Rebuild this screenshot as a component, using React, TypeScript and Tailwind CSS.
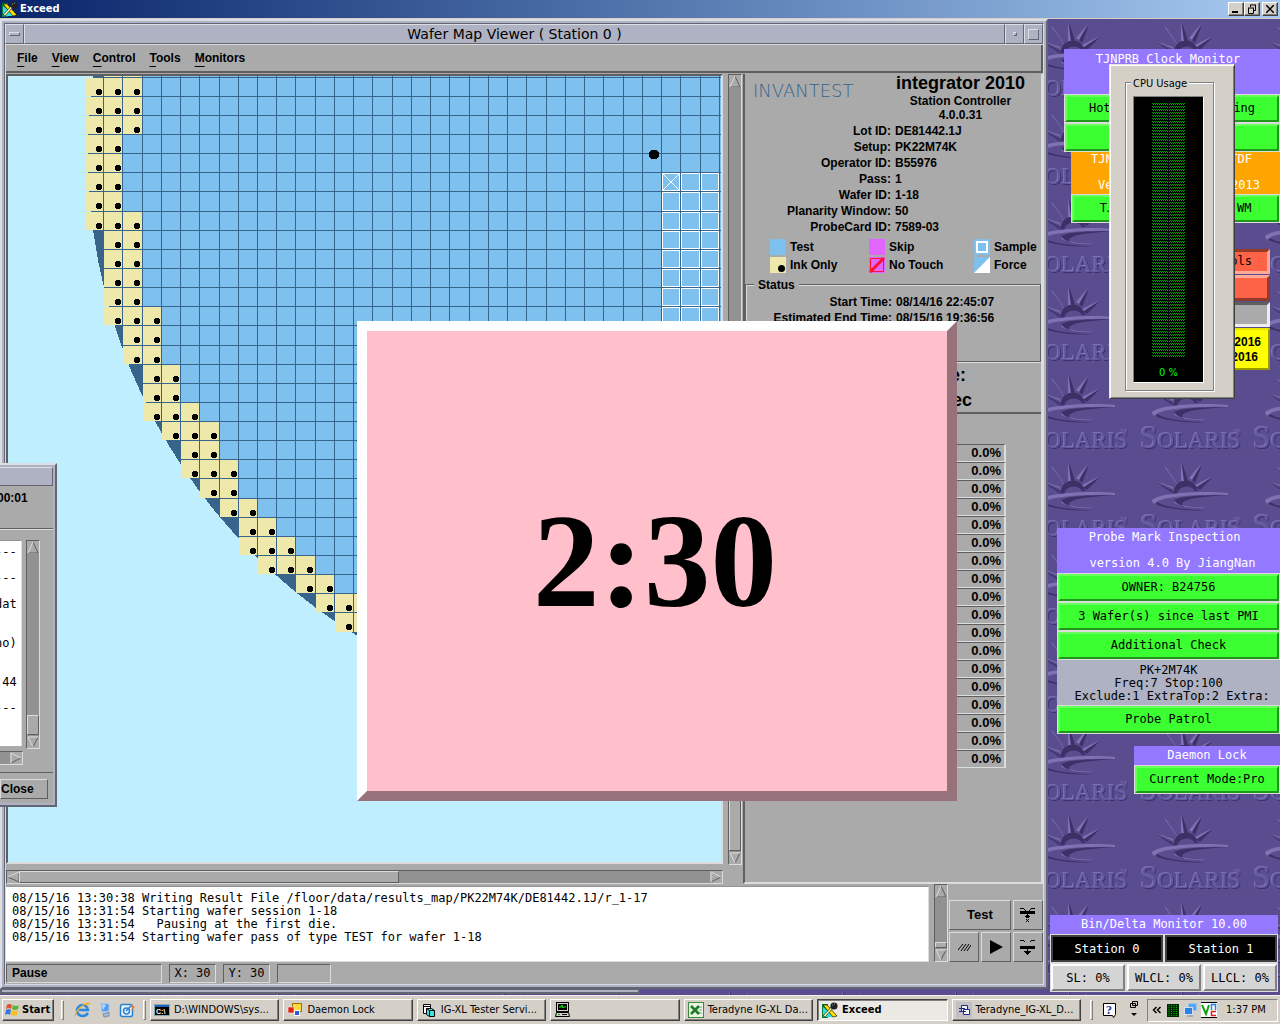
import React from 'react';

const MONO = "font-['DejaVu_Sans_Mono','Liberation_Mono',monospace]";
const TAHOMA = "font-['DejaVu_Sans_Condensed','DejaVu_Sans',sans-serif]";
const RAISED = 'border border-t-[#dcdcdc] border-l-[#dcdcdc] border-b-[#5f5f5f] border-r-[#5f5f5f]';
const SUNKEN = 'border border-t-[#5f5f5f] border-l-[#5f5f5f] border-b-[#dcdcdc] border-r-[#dcdcdc]';
const SUNKEN2 = 'border-2 border-t-[#5f5f5f] border-l-[#5f5f5f] border-b-[#dcdcdc] border-r-[#dcdcdc]';

/* ---------- wafer drawing ---------- */

const gx = (i: number) => 95 + 19 * i + Math.floor(i * 0.24 + 0.58);
const gy = (j: number) => 1 + 19 * j + Math.floor(j / 7.5 + 0.15);

// [first, last] ink-only column for each die row, starting one row above the visible area
const INK: [number, number][] = [
  [0, 1],
  [-1, 1], [-1, 1], [-1, 1], [-1, 0], [-1, 0], [-1, 0], [-1, 0], [-1, 1],
  [0, 1], [0, 1], [0, 1], [0, 1], [0, 2], [1, 2], [1, 2], [2, 3], [2, 3],
  [2, 4], [3, 5], [4, 5], [4, 6], [5, 6], [6, 7], [7, 8], [7, 9], [8, 10],
  [10, 11], [11, 13], [12, 14], [14, 16],
];

function WaferMap() {
  const cells: React.ReactNode[] = [];
  INK.forEach(([a, b], k) => {
    const r = k - 1;
    const y = gy(r) + 1;
    const h = gy(r + 1) - y;
    for (let c = a; c < 33; c++) {
      const ink = c <= b;
      const x = gx(c) + 1;
      cells.push(
        <rect key={`${r}:${c}`} x={x} y={y} width={gx(c + 1) - x} height={h} fill={ink ? '#eee8aa' : '#7ec0ee'} />,
      );
      if (ink) cells.push(<path key={`d${r}:${c}`} d={`M${gx(c) + 13} ${gy(r) + 12}h4v1h1v4h-1v1h-4v-1h-1v-4h1z`} fill="#000" />);
    }
  });
  const samples: React.ReactNode[] = [];
  for (let r = 5; r < 20; r++)
    for (let c = 29; c < 32; c++)
      samples.push(
        <rect key={`${r}-${c}`} x={gx(c) + 1.5} y={gy(r) + 1.5} width={gx(c + 1) - gx(c) - 2} height={gy(r + 1) - gy(r) - 2} fill="none" stroke="#fff" />,
      );
  return (
    <svg className="absolute inset-0 h-full w-full" shapeRendering="crispEdges" aria-label="Wafer map">
      <circle cx="646" cy="78" r="566" fill="#36648b" />
      {cells}
      {samples}
      <path d={`M${gx(29) + 1} ${gy(5) + 1}l18 18m0 -18l-18 18`} stroke="#fff" fill="none" />
      <circle cx="646" cy="78.5" r="5" />
    </svg>
  );
}

/* ---------- desktop backdrop ---------- */

const LIGHT = '#7e72b4';
const DARK = '#3b3166';

function SolarisText({ x, y, fill }: { x: number; y: number; fill: string }) {
  return (
    <g fill={fill} fontFamily="Liberation Serif, serif">
      <text x={x} y={y} fontSize="32">S<tspan fontSize="23">OLARIS</tspan></text>
      <text x={x + 94} y={y - 15} fontSize="4">TM</text>
    </g>
  );
}

function Backdrop() {
  return (
    <svg className="absolute inset-0 h-full w-full" aria-hidden="true">
      <defs>
        <pattern id="solaris" patternUnits="userSpaceOnUse" x="5" y="1" width="113" height="88">
          <rect width="113" height="88" fill="#594d8f" />
          <g fill={DARK}>
            <path d="M47 2L53 21L48 21ZM67 5L60 23L56 19ZM78 17L65 30L61 27ZM21 22L38 31L39 34ZM30 8L42 25L43 24Z" />
            <path d="M39 34A12 12 0 0 1 63 31L60 31A10 10 0 0 0 42 34Z" />
            <path d="M18 41C18 47 50 52 73 50C50 50 28 47 20 41Z" />
            <path d="M93 35C60 35 40 37 39 41C42 45 46 46 50 47C44 43 44 38 93 35Z" />
          </g>
          <g fill={LIGHT}>
            <path d="M46 1L46 21L49 21ZM66 4L54 18L57 20ZM78 16L60 25L62 27ZM20 21L39 29L38 27Z" />
            <path d="M93 33C60 30 18 34 17 41C18 44 20 44 21 43C24 37 60 34 93 35Z" />
            <path d="M40 41C42 46 55 47 72 48C55 49 40 45 39 42Z" />
          </g>
          <path d="M30 7L42 24" stroke={LIGHT} fill="none" />
          <SolarisText x={6} y={77} fill={DARK} />
          <SolarisText x={4} y={75} fill={LIGHT} />
          <SolarisText x={5} y={76} fill="#6257a0" />
        </pattern>
      </defs>
      <rect width="100%" height="100%" fill="url(#solaris)" />
    </svg>
  );
}

/* ---------- Motif pieces ---------- */

const ARROWS = {
  up: ['M6 1L1 12', 'M6 1L11 12H1'],
  down: ['M11 1H1L6 11', 'M11 1L6 11'],
  left: ['M12 1L1 6', 'M1 6L12 11V1'],
  right: ['M1 11V1L11 6', 'M11 6L1 11'],
};

function Arrow({ dir }: { dir: keyof typeof ARROWS }) {
  return (
    <button aria-label={`Scroll ${dir}`} className="block h-3 w-3 shrink-0 bg-[#aaaaaa]">
      <svg width="12" height="12" fill="none">
        <path d={ARROWS[dir][1]} stroke="#5f5f5f" />
        <path d={ARROWS[dir][0]} stroke="#dcdcdc" />
      </svg>
    </button>
  );
}

function VScroll({ thumb }: { thumb: string }) {
  return (
    <div className={`flex w-[14px] shrink-0 flex-col bg-[#929292] ${SUNKEN}`}>
      <Arrow dir="up" />
      <div className="flex flex-1 flex-col justify-end">
        <div className={`mb-px bg-[#aaaaaa] ${RAISED} ${thumb}`} />
      </div>
      <Arrow dir="down" />
    </div>
  );
}

const FRAME = 'border-2 border-t-[#dcdee5] border-l-[#dcdee5] border-b-[#636573] border-r-[#636573] bg-[#aeb2c3]';

/* ---------- wafer map viewer ---------- */

const INFO = [
  ['Lot ID:', 'DE81442.1J'],
  ['Setup:', 'PK22M74K'],
  ['Operator ID:', 'B55976'],
  ['Pass:', '1'],
  ['Wafer ID:', '1-18'],
  ['Planarity Window:', '50'],
  ['ProbeCard ID:', '7589-03'],
];

function Pairs({ rows }: { rows: string[][] }) {
  return (
    <dl className="grid grid-cols-[146px_1fr] gap-x-1">
      {rows.map(([k, v]) => (
        <React.Fragment key={k}>
          <dt className="text-right leading-4 whitespace-nowrap">{k}</dt>
          <dd className="leading-4">{v}</dd>
        </React.Fragment>
      ))}
    </dl>
  );
}

function Legend() {
  return (
    <div className="mt-1 grid grid-cols-[99px_105px_1fr] gap-y-[2px] pl-[25px]">
      <Key label="Test"><rect width="16" height="16" fill="#7ec0ee" /></Key>
      <Key label="Skip"><rect width="16" height="16" fill="#e066ff" /></Key>
      <Key label="Sample"><rect width="16" height="16" fill="#7ec0ee" /><rect x="3" y="3" width="10" height="10" fill="none" stroke="#fff" strokeWidth="2" /></Key>
      <Key label="Ink Only"><rect width="16" height="16" fill="#eee8aa" /><circle cx="11.5" cy="11.5" r="3.5" /></Key>
      <Key label="No Touch"><rect width="16" height="16" fill="#e066ff" /><path d="M1.5 1.5H14.5V14.5H1.5ZM1 15L15 1" stroke="#ff1030" fill="none" /><path d="M1 15L15 1" stroke="#ff1030" strokeWidth="3" /></Key>
      <Key label="Force"><rect width="16" height="16" fill="#7ec0ee" /><path d="M16 0V16H0Z" fill="#fff" /></Key>
    </div>
  );
}

function Key({ label, children }: { label: string; children: React.ReactNode }) {
  return (
    <div className="flex h-4 items-center gap-1 whitespace-nowrap">
      <svg width="16" height="16" className="shrink-0">{children}</svg>
      <span>{label}</span>
    </div>
  );
}

function InfoPanel() {
  return (
    <section className="flex w-[300px] shrink-0 flex-col border-r-2 border-b-2 border-l-2 border-r-[#dcdcdc] border-b-[#dcdcdc] border-l-[#5f5f5f]">
      <div className="flex justify-between pr-4 pl-2">
        <div className="pt-[9px] font-['DejaVu_Sans',sans-serif] text-[18px] leading-4 font-extralight text-[#36648b]">INVANTEST</div>
        <div className="text-center">
          <div className="mb-[2px] text-[18px] leading-[18px]">integrator 2010</div>
          <div className="leading-[14px]">Station Controller</div>
          <div className="leading-[14px]">4.0.0.31</div>
        </div>
      </div>
      <div className="mt-px"><Pairs rows={INFO} /></div>
      <Legend />
      <div className="relative mt-[11px] h-[78px] border border-[#5f5f5f] pt-[9px] shadow-[inset_1px_1px_#dcdcdc]">
        <div className="absolute -top-2 left-2 bg-[#aaaaaa] px-1 leading-4">Status</div>
        <Pairs rows={[['Start Time:', '08/14/16 22:45:07'], ['Estimated End Time:', '08/15/16 19:36:56']]} />
      </div>
      <div className="h-[52px] border-t border-b-2 border-t-[#dcdcdc] border-b-[#5f5f5f] pr-[69px] text-right text-[18px] leading-[25px]">
        <div className="pr-[6px]">Time:</div>
        <div>0.0 sec</div>
      </div>
      <ul className="mt-[30px] mr-[35px] ml-10 text-[13px]">
        {Array.from({ length: 18 }, (_, i) => (
          <li key={i} className="h-[18px] border-t border-r-2 border-b border-t-[#5f5f5f] border-r-[#dcdcdc] border-b-[#dcdcdc] pr-[3px] text-right leading-4">0.0%</li>
        ))}
      </ul>
    </section>
  );
}

const LOG = `08/15/16 13:30:38 Writing Result File /floor/data/results_map/PK22M74K/DE81442.1J/r_1-17
08/15/16 13:31:54 Starting wafer session 1-18
08/15/16 13:31:54   Pausing at the first die.
08/15/16 13:31:54 Starting wafer pass of type TEST for wafer 1-18`;

function Controls() {
  const b = `flex items-center justify-center bg-[#aaaaaa] ${RAISED}`;
  return (
    <div className="mt-4 grid grid-cols-[30px_30px_30px] grid-rows-[30px_30px] gap-[2px]">
      <button className={`col-span-2 text-[13px] font-bold ${b}`}>Test</button>
      <button aria-label="Raise" className={b}>
        <svg width="16" height="16" shapeRendering="crispEdges"><path d="M0 4H15V7H0ZM7 7L10 10H9V11H6V10H4Z" /><path d="M0 1H3L6 4M15 1H12L9 4M6 12h1m1 0h1m-2 1h1m-2 1h1m1 0h1" stroke="#000" fill="none" /></svg>
      </button>
      <button aria-label="Pattern" className={b}>
        <svg width="13" height="7"><path d="M0 6L5 0M3 7L8 0M6 7L11 0M9 7L13 1" stroke="#000" fill="none" /></svg>
      </button>
      <button aria-label="Run" className={b}>
        <svg width="14" height="14"><path d="M1 0L14 7L1 14Z" /></svg>
      </button>
      <button aria-label="Lower" className={b}>
        <svg width="16" height="16" shapeRendering="crispEdges"><path d="M0 7H15V10H0ZM4 12H11L7.5 16Z" /><path d="M0 1H3L5 3M15 1H12L10 3M7 10v2" stroke="#000" fill="none" /></svg>
      </button>
    </div>
  );
}

function Viewer() {
  const cap = 'border border-t-[#dcdee5] border-l-[#dcdee5] border-b-[#636573] border-r-[#636573]';
  return (
    <div className={`absolute top-0 right-[232px] bottom-[6px] left-0 flex flex-col p-[2px] ${FRAME}`}>
      <div className="flex min-h-0 flex-1 flex-col border border-t-[#636573] border-l-[#636573] border-b-[#dcdee5] border-r-[#dcdee5]">
        <div className="flex h-5 shrink-0">
          <button aria-label="Window menu" className={`flex w-[19px] items-center justify-center ${cap}`}><span className={`h-1 w-[11px] ${cap}`} /></button>
          <div className={`flex-1 text-center font-['DejaVu_Sans',sans-serif] text-[14px] leading-[18px] ${cap}`}>Wafer Map Viewer ( Station 0 )</div>
          <button aria-label="Minimize" className={`flex w-[19px] items-center justify-center ${cap}`}><span className={`h-1 w-1 ${cap}`} /></button>
          <button aria-label="Maximize" className={`flex w-[19px] items-center justify-center ${cap}`}><span className={`h-[11px] w-[11px] ${cap}`} /></button>
        </div>
        <div className="flex min-h-0 flex-1 flex-col border-t border-l border-[#dcdcdc] bg-[#aaaaaa] text-[12px] font-bold">
          <nav className="flex h-7 shrink-0 items-center gap-[14px] border-r-2 border-b-2 border-[#5f5f5f] pl-[11px]">
            {['File', 'View', 'Control', 'Tools', 'Monitors'].map((m) => (
              <button key={m} className="leading-4"><span className="underline underline-offset-4">{m[0]}</span>{m.slice(1)}</button>
            ))}
          </nav>
          <div className="flex min-h-0 flex-1 pt-px">
            <div className="flex min-w-0 flex-1 flex-col">
              <div className={`relative min-h-0 flex-1 overflow-hidden bg-[#bfefff] ${SUNKEN2}`}><WaferMap /></div>
              <div className={`mt-[6px] flex h-[14px] shrink-0 bg-[#929292] ${SUNKEN}`}>
                <Arrow dir="left" />
                <div className="flex flex-1"><div className={`w-[55%] bg-[#aaaaaa] ${RAISED}`} /></div>
                <Arrow dir="right" />
              </div>
            </div>
            <div className="mr-px mb-[19px] ml-[5px] flex"><VScroll thumb="h-[420px]" /></div>
            <InfoPanel />
          </div>
          <div className="flex h-[78px] shrink-0">
            <textarea readOnly aria-label="Session log" value={LOG} className={`mt-[2px] min-w-0 flex-1 resize-none overflow-hidden border-t border-r border-b border-[#929292] border-r-[#dcdcdc] border-b-[#dcdcdc] bg-white pt-[5px] pl-[6px] text-[12px] leading-[13px] font-normal whitespace-pre outline-none ${MONO}`} />
            <div className="mr-px ml-[5px] flex"><VScroll thumb="h-[6px]" /></div>
            <Controls />
          </div>
          <div className="flex h-[22px] shrink-0 gap-[7px] pt-[2px]">
            <div className={`mb-px w-[156px] pl-[5px] text-[12px] leading-[17px] ${SUNKEN}`}>Pause</div>
            <div className={`mb-px w-[47px] text-center font-normal leading-[17px] ${SUNKEN} ${MONO}`}>X: 30</div>
            <div className={`mb-px w-[47px] text-center font-normal leading-[17px] ${SUNKEN} ${MONO}`}>Y: 30</div>
            <div className={`mb-px w-[54px] ${SUNKEN}`} />
          </div>
        </div>
      </div>
    </div>
  );
}

/* ---------- partially hidden log window ---------- */

function SideWindow() {
  return (
    <div className={`absolute top-[444px] left-0 flex h-[344px] w-[57px] flex-col border-l-0 py-[2px] pr-[2px] text-[12px] ${FRAME}`}>
      <div className="h-[19px] shrink-0 border border-l-0 border-t-[#dcdee5] border-b-[#636573] border-r-[#636573]" />
      <div className="flex flex-1 flex-col overflow-hidden bg-[#aaaaaa]">
        <div className="h-[43px] border-b border-[#5f5f5f] pt-1 font-bold leading-4"><span className="-ml-[3px]">00:01</span></div>
        <div className="flex h-[222px] border-t border-[#dcdcdc] pt-[10px]">
          <pre className={`h-[206px] w-[22px] overflow-hidden border-t border-r border-t-[#929292] border-r-[#dcdcdc] bg-white pt-[5px] leading-[13px] ${MONO}`}>
            <div className="-ml-[5px] w-[22px] overflow-hidden">{'---\n\n---\n\ndat\n\n\nno)\n\n\n 44\n\n---'}</div>
          </pre>
          <div className="ml-[4px] flex h-[209px]"><VScroll thumb="h-5" /></div>
        </div>
        <div className={`flex h-[14px] w-[23px] justify-end border-l-0 bg-[#929292] ${SUNKEN}`}><Arrow dir="right" /></div>
        <div className="mt-[7px] flex-1 border-t border-[#5f5f5f] pt-[6px]">
          <button className={`h-5 w-[48px] overflow-hidden bg-[#aaaaaa] pr-[14px] text-right leading-4 font-bold ${RAISED}`}>Close</button>
        </div>
      </div>
    </div>
  );
}

/* ---------- right-hand tool windows ---------- */

function Green({ children }: { children?: React.ReactNode }) {
  return (
    <button className="block h-[29px] w-full border border-[#dcdcdc]">
      <span className="block h-[27px] border-2 border-t-[#68ff5c] border-l-[#68ff5c] border-r-[#20961a] border-b-[#20961a] bg-[#3cff32] leading-[23px] whitespace-pre">{children}</span>
    </button>
  );
}

function ToolWindows() {
  const base = `absolute text-center text-[12px] whitespace-pre ${MONO}`;
  return (
    <>
      <div className={`${base} top-[30px] right-0 w-[216px]`}>
        <div className="h-[45px] bg-[#9478ff] pr-2 leading-5 text-white">TJNPRB Clock Monitor</div>
        <Green>Hot Lot Status Checking</Green>
        <Green />
        <div className="ml-[7px]">
          <div className="h-[42px] bg-[#ffa500] pt-px text-white">
            <div className="flex justify-between pr-7 pl-5 leading-[13px]"><span>TJN</span><span>TDF</span></div>
            <div className="mt-[13px] flex justify-between pr-5 pl-[27px] leading-[13px]"><span>Ver</span><span>2013</span></div>
          </div>
          <Green>TJN                WM</Green>
        </div>
      </div>
      <div className={`${base} top-[230px] right-[10px] w-[140px]`}>
        <button className="block h-[25px] w-full border-[3px] border-t-[#953a29] border-r-[#ffa898] border-b-[#ffa898] border-l-[#953a29] bg-[#ff6347] pr-[15px] text-right leading-[19px]">Tools</button>
        <button aria-label="Tool" className="mt-px block h-[26px] w-full border-[3px] border-t-[#ffa898] border-r-[#953a29] border-b-[#953a29] border-l-[#ffa898] bg-[#ff6347]" />
        <button aria-label="Idle" className="mt-px block h-[25px] w-full border-[3px] border-t-[#5f5f5f] border-r-[#eeeeee] border-b-[#eeeeee] border-l-[#5f5f5f] bg-[#aaaaaa]" />
        <div className="mt-px h-[42px] border-2 border-t-[#e6e600] border-r-[#999900] border-b-[#999900] border-l-[#e6e600] bg-[#ffff00] pt-[5px] text-right font-['Liberation_Sans',sans-serif] text-[12px] font-bold leading-[15px]">
          <div className="pr-[7px]">08/14/2016</div>
          <div className="pr-[10px]">08/15/2016</div>
        </div>
      </div>
      <div className={`${base} top-[509px] right-0 w-[223px]`}>
        <div className="h-[45px] bg-[#9478ff] pt-[3px] leading-[13px] text-white">
          <div className="pr-2">Probe Mark Inspection</div>
          <div className="mt-[13px] pl-2">version 4.0 By JiangNan</div>
        </div>
        <Green>OWNER: B24756</Green>
        <Green>3 Wafer(s) since last PMI</Green>
        <Green>Additional Check</Green>
        <div className="h-[45px] bg-[#aeb2c3] pt-1 leading-[13px]">{'PK+2M74K\nFreq:7 Stop:100\n Exclude:1 ExtraTop:2 Extra:'}</div>
        <Green>Probe Patrol</Green>
      </div>
      <div className={`${base} top-[727px] right-0 w-[146px]`}>
        <div className="h-[19px] bg-[#9478ff] leading-[19px] text-white">Daemon Lock</div>
        <Green>Current Mode:Pro</Green>
      </div>
      <div className={`${base} top-[896px] right-[2px] w-[228px] bg-[#dcdcdc]`}>
        <div className="h-[19px] bg-[#9478ff] leading-[19px] text-white">Bin/Delta Monitor 10.00</div>
        <div className="flex gap-[2px] p-px">
          {['Station 0', 'Station 1'].map((s) => (
            <button key={s} className="h-[27px] flex-1 border-2 border-[#404040] bg-black leading-[22px] text-white">{s}</button>
          ))}
        </div>
        <div className="flex gap-[2px] p-px">
          {['SL: 0%', 'WLCL: 0%', 'LLCL: 0%'].map((s) => (
            <button key={s} className="h-[27px] w-1/3 border-2 border-t-white border-r-[#808080] border-b-[#808080] border-l-white bg-[#d4d4d4] leading-[22px]">{s}</button>
          ))}
        </div>
      </div>
    </>
  );
}

function CpuUsage() {
  return (
    <div className={`absolute top-[45px] right-[45px] h-[335px] w-[126px] border border-t-[#e8e6e0] border-l-[#e8e6e0] border-r-[#404040] border-b-[#404040] bg-[#d4d0c8] px-[15px] pt-[17px] text-[11px] shadow-[inset_1px_1px_#fff,inset_-1px_-1px_#808080] ${TAHOMA}`}>
      <div className="relative h-[309px] w-[89px] border border-[#808080] px-[7px] pt-[13px] shadow-[inset_1px_1px_#fff,1px_1px_#fff]">
        <div className="absolute -top-[7px] left-[5px] bg-[#d4d0c8] px-[2px] leading-[15px] whitespace-nowrap">CPU Usage</div>
        <div className="flex h-[287px] w-[71px] flex-col items-center border border-t-[#808080] border-l-[#808080] border-r-white border-b-white bg-black pt-[6px]">
          <svg width="33" height="255" shapeRendering="crispEdges" aria-hidden="true">
            <defs>
              <pattern id="dots" width="2" height="3" patternUnits="userSpaceOnUse"><path d="M0 0h1v1h-1zM1 1h1v1h-1z" fill="#00a000" /></pattern>
            </defs>
            <rect width="16" height="255" fill="url(#dots)" />
            <rect x="17" width="16" height="255" fill="url(#dots)" />
          </svg>
          <div className="mt-[6px] leading-[18px] text-[#00ff00]">0 %</div>
        </div>
      </div>
    </div>
  );
}

/* ---------- Windows shell ---------- */

function ExceedIcon() {
  return (
    <svg width="16" height="16" className="shrink-0">
      <path d="M0 2H6V16H0Z" fill="#008040" /><path d="M1 5L13 15H1Z" fill="#30e0e0" />
      <path d="M1 3L5 3L15 14L11 15Z" fill="#ffe000" stroke="#000" strokeWidth=".6" />
      <path d="M13 4L3 15L1 14L10 4Z" fill="#fff59a" stroke="#000" strokeWidth=".6" />
      <circle cx="12" cy="4" r="3.6" fill="#222" /><path d="M10 3h1m1-1h1" stroke="#999" />
    </svg>
  );
}

const ICONS: Record<string, React.ReactNode> = {
  cmd: <svg width="16" height="16"><rect x=".5" y="2.5" width="15" height="11" fill="#000" stroke="#8aa" /><rect x="1" y="3" width="14" height="2" fill="#1d5fc0" /><text x="2" y="12" fontSize="7" fontWeight="bold" fill="#fff" fontFamily="Liberation Sans">C:\</text></svg>,
  daemon: <svg width="16" height="16"><rect x="5.5" y="1.5" width="9" height="8" fill="#ffd840" stroke="#a07800" /><rect x="1" y="5" width="6" height="6" fill="#e02818" stroke="#fff" strokeWidth=".5" /><rect x="7.5" y="8.5" width="5" height="5" fill="#3058d0" stroke="#fff" /></svg>,
  vb: <svg width="16" height="16"><path d="M2.5 2.5H9.5V11.5H2.5ZM2.5 4.500H9.5" fill="#fff" stroke="#000" /><path d="M5.500 6.500H10.500L13.500 8.500V14.500H8.500L5.500 12.500Z" fill="#40e0e0" stroke="#000" /><path d="M5.500 6.500L8.500 8.500H13.500M8.500 8.500V14.500" fill="none" stroke="#000" /></svg>,
  pc: <svg width="16" height="16"><rect x="2.500" y=".5" width="12" height="9" fill="#d4d0c8" stroke="#000" /><rect x="4" y="2" width="9" height="6" fill="#000" /><path d="M5 5h2l1-2 1 3 1-1h2" stroke="#0f0" fill="none" /><path d="M2.500 10.500H14.500L15.500 14.500H1.500Z" fill="#d4d0c8" stroke="#000" /><path d="M4 12.500h2" stroke="#0a0" /><path d="M8 12.500h5" stroke="#000" /></svg>,
  excel: <svg width="16" height="16"><rect x=".5" y=".5" width="15" height="15" fill="#e8f3e2" stroke="#3a8a3a" /><path d="M10 5h4M11 8h3M11 11h3" stroke="#7a9" /><path d="M3 4L11 12M11 4L3 12" stroke="#1e7a2a" strokeWidth="2.500" /></svg>,
  exceed: <ExceedIcon />,
  doc: <svg width="16" height="16"><rect width="16" height="16" fill="#c0c0c4" /><path d="M5.500 3.500H11.500V9.500H5.500Z" fill="#eef" stroke="#202880" /><path d="M7.500 7.500H13.500V12.500H7.500Z" fill="#fff" stroke="#202880" /><path d="M3 6.500h6M3 9.500h7" stroke="#202880" /></svg>,
};

const TASKS: [string, string][] = [
  ['cmd', 'D:\\WINDOWS\\sys...'],
  ['daemon', 'Daemon Lock'],
  ['vb', 'IG-XL Tester Servi...'],
  ['pc', ''],
  ['excel', 'Teradyne IG-XL Da...'],
  ['exceed', 'Exceed'],
  ['doc', 'Teradyne_IG-XL_D...'],
];

const WIN = 'border border-t-white border-l-white border-r-[#404040] border-b-[#404040] shadow-[inset_-1px_-1px_#808080]';
const GRIP = 'h-5 w-[3px] shrink-0 border border-t-white border-l-white border-r-[#808080] border-b-[#808080]';

function Taskbar() {
  return (
    <footer className={`relative flex h-[29px] shrink-0 items-center border-t border-[#f4f2ec] bg-[#d4d0c8] pr-[2px] pl-[2px] text-[11px] ${TAHOMA}`}>
      <button className={`flex h-[22px] w-[52px] shrink-0 items-center gap-[2px] bg-[#d4d0c8] pl-px font-bold ${WIN}`}>
        <svg width="16" height="16" className="shrink-0"><path d="M3 3Q5 1 8 3L7 7Q5 5 2 7Z" fill="#e8502a" /><path d="M9 3Q12 5 15 3L14 7Q11 9 8 7Z" fill="#5cb430" /><path d="M2 8Q5 6 7 8L6 13Q4 11 1 13Z" fill="#3a78d8" /><path d="M8 8Q11 10 14 8L13 13Q10 14 7 13Z" fill="#f8c020" /></svg>
        Start
      </button>
      <span className={`mx-[7px] ${GRIP}`} />
      <div className="flex w-[72px] shrink-0 items-center gap-[6px] pl-1">
        <svg width="16" height="16"><path d="M13 11Q11 14 8 14A5.500 5.500 0 1 1 13 8H4" fill="none" stroke="#2b8ae0" strokeWidth="2.500" /><path d="M1 14Q-1 11 6 5T15 2Q14 1 11 3" fill="none" stroke="#f0b020" strokeWidth="1.200" /></svg>
        <svg width="16" height="16"><path d="M4 1L12 2V9L5 10Z" fill="#4f9cf4" stroke="#a8c8e8" /><path d="M5 2L9 3L6 8Z" fill="#b8dcff" /><path d="M6 12L12 10V14L7 15Z" fill="#a0b4d4" stroke="#8090b0" /></svg>
        <svg width="16" height="16"><rect x="1.500" y="2.500" width="12" height="12" rx="2" fill="#e8f4ff" stroke="#2a80d0" strokeWidth="1.500" /><circle cx="7.500" cy="9" r="3" fill="none" stroke="#2a80d0" strokeWidth="1.500" /><path d="M7 9L13 3" stroke="#2a80d0" strokeWidth="1.500" /><path d="M12 2L16 5L13 8Z" fill="#f08030" /></svg>
      </div>
      <span className={`mr-[4px] ${GRIP}`} />
      <div className="flex min-w-0 flex-1 gap-1">
        {TASKS.map(([icon, label]) => (
          <button
            key={icon}
            aria-label={label || 'Monitor'}
            className={
              icon === 'exceed'
                ? 'flex h-[22px] min-w-0 flex-1 items-center gap-1 border border-t-[#404040] border-l-[#404040] border-r-white border-b-white bg-[#ebe9e4] pl-1 font-bold shadow-[inset_1px_1px_#808080]'
                : `flex h-[22px] min-w-0 flex-1 items-center gap-1 overflow-hidden bg-[#d4d0c8] pl-[3px] whitespace-nowrap ${WIN}`
            }
          >
            <span className="shrink-0">{ICONS[icon]}</span>
            {label}
          </button>
        ))}
      </div>
      <div className="ml-[9px] flex shrink-0 items-center">
        <span className={GRIP} />
        <svg width="14" height="15" className="ml-[10px]"><path d="M.5 .5H12.500V11.500L10.500 14.500L9.500 12.500H.5Z" fill="#fff" stroke="#000" /><text x="3" y="11" fontSize="12" fontWeight="bold" fill="#1830a0" fontFamily="Liberation Serif">?</text></svg>
        <svg width="10" height="20" className="ml-3"><path d="M3.500 1.500H8.500V5.500H3.500ZM1.500 3.500H6.500V7.500H1.500Z" fill="#d4d0c8" stroke="#000" /><path d="M2 13H8L5 16Z" /></svg>
      </div>
      <div className="ml-2 flex h-[23px] w-[131px] shrink-0 items-center border border-t-[#808080] border-l-[#808080] border-r-white border-b-white pl-1">
        <svg width="10" height="8"><path d="M4.500 1L1.500 4L4.500 7M8.500 1L5.500 4L8.500 7" fill="none" stroke="#000" strokeWidth="1.500" /></svg>
        <svg width="12" height="13" className="ml-[5px]"><rect width="12" height="13" fill="#002800" /><path d="M2 1V12M4.500 1V12M7 1V12M9.500 1V12" stroke="#00b000" strokeDasharray="1 1" /></svg>
        <svg width="15" height="16" className="ml-1"><rect x="5.500" y="1.500" width="8" height="7" fill="#58a8f0" stroke="#9fc4e8" /><rect x="1.500" y="5.500" width="8" height="7" fill="#2f80e0" stroke="#cfe0f4" /><path d="M4 14h6" stroke="#789" /></svg>
        <svg width="16" height="16" className="ml-[3px]"><rect width="16" height="16" fill="#fff" /><path d="M0 .5H16M0 15.500H16" stroke="#000" /><path d="M1 3L5 12L8 3" fill="none" stroke="#10a010" strokeWidth="2" /><path d="M10.500 8V2.500H14.500V8" fill="none" stroke="#2080f0" strokeWidth="1.500" /><path d="M15 9.500H10.500V13.500H15" fill="none" stroke="#e02020" strokeWidth="1.500" /></svg>
        <span className="ml-[9px] whitespace-nowrap">1:37 PM</span>
      </div>
    </footer>
  );
}

export default function App() {
  const cap = `flex h-[14px] w-4 items-center justify-center bg-[#d4d0c8] ${WIN}`;
  return (
    <div className="flex min-h-screen flex-col overflow-hidden bg-[#594d8f] font-['Liberation_Sans',Arial,sans-serif] text-black">
      <header className={`flex h-[19px] shrink-0 items-center border-b border-[#d4d0c8] bg-linear-to-r from-[#0a246a] to-[#a6caf0] pr-[2px] pl-[2px] ${TAHOMA}`}>
        <ExceedIcon />
        <h1 className="ml-[2px] flex-1 text-[11px] font-bold text-white">Exceed</h1>
        <button aria-label="Minimize" className={cap}><svg width="8" height="8"><path d="M0 6H6V8H0Z" /></svg></button>
        <button aria-label="Restore" className={cap}><svg width="10" height="10" fill="none" stroke="#000"><path d="M3 1H9M3.500 1V3M8.500 1V6.500H7M1 4H7M1.500 4V9.500H6.500V4" /></svg></button>
        <button aria-label="Close" className={`ml-[2px] ${cap}`}><svg width="8" height="8"><path d="M0 0L8 8M8 0L0 8" stroke="#000" strokeWidth="1.500" /></svg></button>
      </header>
      <main className="relative flex-1 overflow-hidden">
        <Backdrop />
        <div className="absolute bottom-px left-0 h-[6px] w-1/2 border-2 border-[#636573] bg-[#aeb2c3]" />
        <Viewer />
        <SideWindow />
        <ToolWindows />
        <CpuUsage />
        <div role="dialog" aria-label="Clock" className="absolute top-[302px] left-[357px] flex h-[480px] w-[600px] items-center justify-center border-[10px] border-t-white border-r-[#97727a] border-b-[#97727a] border-l-white bg-[#ffc0cb] pr-1 font-['Liberation_Serif',serif] text-[133px] leading-none font-bold">
          2:30
        </div>
      </main>
      <Taskbar />
    </div>
  );
}
